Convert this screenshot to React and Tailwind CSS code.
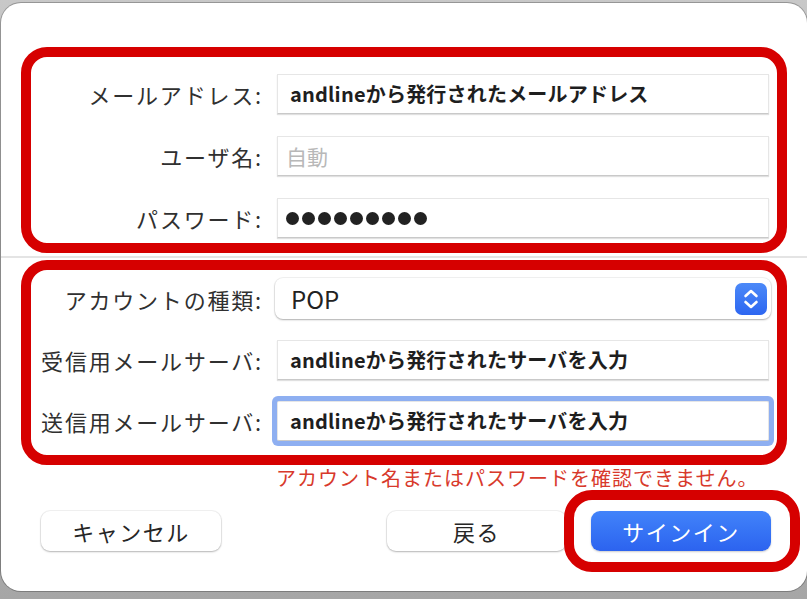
import React from "react";

const font = "font-['Noto_Sans_CJK_JP',sans-serif]";

function Label({ children }) {
  return (
    <div className="w-[232px] shrink-0 text-right text-[22px] leading-none tracking-[1.8px] text-[#303030]">
      {children}
    </div>
  );
}

function Field({ children, focused }) {
  return (
    <div
      className={`w-[492px] h-[40px] flex items-center pl-[12px] bg-white border border-[#e6e6e6] border-b-[#c9c9c9] ${
        focused ? "rounded-[2px] shadow-[0_0_0_5px_#8eaff1]" : "shadow-[0_1px_1px_rgba(0,0,0,0.12)]"
      }`}
    >
      {children}
    </div>
  );
}

function ValueText({ children }) {
  return <span className="text-[20px] font-bold tracking-[0.2px] text-[#1e1e1e] leading-none">{children}</span>;
}

function Row({ label, children }) {
  return (
    <div className="flex items-center gap-[14px]">
      <Label>{label}</Label>
      {children}
    </div>
  );
}

export default function App() {
  return (
    <div className={`w-[807px] h-[599px] overflow-hidden bg-gradient-to-b from-[#c8c8c8] to-[#a6a6a6] pt-[3px] ${font}`}>
      {/* Dialog */}
      <div className="ml-[1px] w-[806px] h-[588px] bg-white rounded-[20px] shadow-[0_0_0_1px_rgba(0,0,0,0.25)] pt-[44px]">
        {/* Account info */}
        <div className="mx-[20px] h-[206px] border-[10px] border-[#d60000] rounded-[26px] pt-[17px] flex flex-col gap-[22px]">
          <Row label="メールアドレス:">
            <Field>
              <ValueText>andlineから発行されたメールアドレス</ValueText>
            </Field>
          </Row>
          <Row label="ユーザ名:">
            <Field>
              <span className="text-[21px] leading-none text-[#b8b8b8] -ml-[4px]">自動</span>
            </Field>
          </Row>
          <Row label="パスワード:">
            <Field>
              <div className="flex gap-[3px] -ml-[4px]">
                {Array.from({ length: 9 }).map((_, i) => (
                  <span key={i} className="w-[13px] h-[13px] rounded-full bg-[#222]" />
                ))}
              </div>
            </Field>
          </Row>
        </div>

        <div className="mt-[3px] h-[2px] bg-[#e4e4e4]" />

        {/* Server info */}
        <div className="mt-[2px] mx-[20px] h-[205px] border-[10px] border-[#d60000] rounded-[26px] pt-[8px] flex flex-col gap-[21px]">
          <Row label="アカウントの種類:">
            <div className="-ml-[2px] w-[496px] h-[41px] rounded-[8px] bg-white shadow-[0_1px_2px_rgba(0,0,0,0.28),0_0_0_1px_rgba(0,0,0,0.05)] flex items-center justify-between pl-[16px] pr-[4px]">
              <span className="text-[24px] leading-none text-[#222]">POP</span>
              <div className="w-[32px] h-[32px] rounded-[7px] bg-gradient-to-b from-[#4c89f8] to-[#2d66f1] flex items-center justify-center">
                <svg width="32" height="32" viewBox="0 0 32 32" fill="none">
                  <path d="M10.5 13 L16 8 L21.5 13" stroke="white" strokeWidth="2.6" strokeLinecap="round" strokeLinejoin="round" />
                  <path d="M10.5 19 L16 24 L21.5 19" stroke="white" strokeWidth="2.6" strokeLinecap="round" strokeLinejoin="round" />
                </svg>
              </div>
            </div>
          </Row>
          <Row label="受信用メールサーバ:">
            <Field>
              <ValueText>andlineから発行されたサーバを入力</ValueText>
            </Field>
          </Row>
          <Row label="送信用メールサーバ:">
            <Field focused>
              <ValueText>andlineから発行されたサーバを入力</ValueText>
            </Field>
          </Row>
        </div>

        {/* Error */}
        <div className="pl-[275px] mt-[2px] text-[20px] leading-[22px] tracking-[1px] text-[#d8392b]">
          アカウント名またはパスワードを確認できません。
        </div>

        {/* Footer */}
        <div className="mt-[1px] h-[82px] flex items-center pl-[40px]">
          <button className="w-[180px] h-[40px] leading-none rounded-[9px] bg-white shadow-[0_1px_2px_rgba(0,0,0,0.25),0_0_0_1px_rgba(0,0,0,0.05)] text-[22px] text-[#262626] tracking-[1.5px]">
            キャンセル
          </button>
          <button className="ml-[166px] w-[179px] h-[40px] leading-none rounded-[9px] bg-white shadow-[0_1px_2px_rgba(0,0,0,0.25),0_0_0_1px_rgba(0,0,0,0.05)] text-[22px] text-[#262626] tracking-[1.5px]">
            戻る
          </button>
          <div className="-ml-[2px] w-[236px] h-[82px] border-[10px] border-[#d60000] rounded-[28px] flex items-center pl-[17px]">
            <button className="w-[180px] h-[40px] leading-none rounded-[9px] bg-gradient-to-b from-[#4283fa] to-[#2c63ef] shadow-[0_1px_2px_rgba(0,0,0,0.2)] text-[22px] text-white tracking-[1.5px]">
              サインイン
            </button>
          </div>
        </div>
      </div>
    </div>
  );
}
